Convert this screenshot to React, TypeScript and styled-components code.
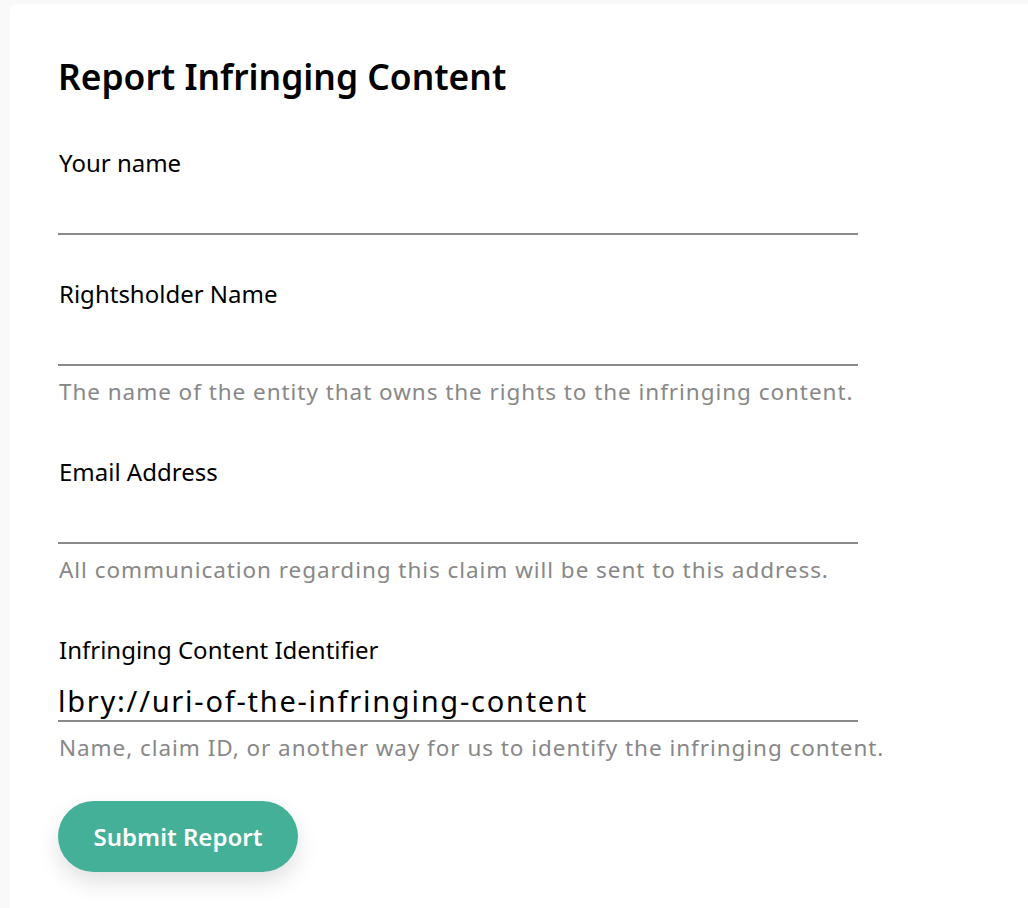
import styled, { createGlobalStyle } from 'styled-components';

const GlobalStyle = createGlobalStyle`
  html, body {
    margin: 0;
    padding: 0;
    background-color: #f9f9f9;
  }
  body {
    font-family: 'Noto Sans', sans-serif;
  }
`;

type Field = {
  label: string;
  help?: string;
  value?: string;
};

const fields: Field[] = [
  { label: 'Your name' },
  {
    label: 'Rightsholder Name',
    help: 'The name of the entity that owns the rights to the infringing content.',
  },
  {
    label: 'Email Address',
    help: 'All communication regarding this claim will be sent to this address.',
  },
  {
    label: 'Infringing Content Identifier',
    value: 'lbry://uri-of-the-infringing-content',
    help: 'Name, claim ID, or another way for us to identify the infringing content.',
  },
];

export default function App() {
  return (
    <>
      <GlobalStyle />
      <Page>
        <Card>
          <Title>Report Infringing Content</Title>
          <Form onSubmit={(e) => e.preventDefault()}>
            {fields.map((field) => (
              <FieldRow key={field.label}>
                <Label>{field.label}</Label>
                <Input type="text" defaultValue={field.value ?? ''} />
                {field.help && <Help>{field.help}</Help>}
              </FieldRow>
            ))}
            <SubmitButton type="submit">Submit Report</SubmitButton>
          </Form>
        </Card>
      </Page>
    </>
  );
}

const Page = styled.div`
  min-height: 908px;
  padding: 4px 0 0 10px;
  box-sizing: border-box;
  display: flex;
`;

const Card = styled.div`
  flex: 1;
  background-color: #ffffff;
  border-top-left-radius: 6px;
  padding: 52px 0 40px 48px;
  min-height: 904px;
  box-sizing: border-box;
`;

const Title = styled.h1`
  margin: 0 0 52px 0;
  font-size: 35.4px;
  line-height: 40px;
  font-weight: 600;
  color: #000;
`;

const Form = styled.form`
  display: flex;
  flex-direction: column;
  align-items: flex-start;
`;

const FieldRow = styled.div`
  display: flex;
  flex-direction: column;
  width: 800px;
  margin-bottom: 44px;

  &:last-of-type {
    margin-bottom: 32px;
  }
`;

const Label = styled.label`
  font-size: 24px;
  line-height: 30px;
  color: #000;
  padding-left: 1px;
`;

const Input = styled.input`
  box-sizing: border-box;
  height: 57px;
  border: none;
  border-bottom: 2px solid #8a8a8a;
  padding: 18px 0 2px 0;
  font-family: 'Noto Sans', sans-serif;
  font-size: 29px;
  letter-spacing: 1.75px;
  color: #000;
  background: transparent;
  outline: none;
`;

const Help = styled.div`
  margin: 11px 0 6px;
  font-size: 22.5px;
  letter-spacing: 0.95px;
  line-height: 30px;
  color: #888888;
  padding-left: 1px;
  white-space: nowrap;
`;

const SubmitButton = styled.button`
  width: 240px;
  height: 71px;
  border: none;
  border-radius: 36px;
  background-color: #44b098;
  color: #fff;
  font-family: 'Noto Sans', sans-serif;
  font-size: 24px;
  font-weight: 600;
  box-shadow: 0 10px 22px rgba(0, 0, 0, 0.12);
  cursor: pointer;
`;
